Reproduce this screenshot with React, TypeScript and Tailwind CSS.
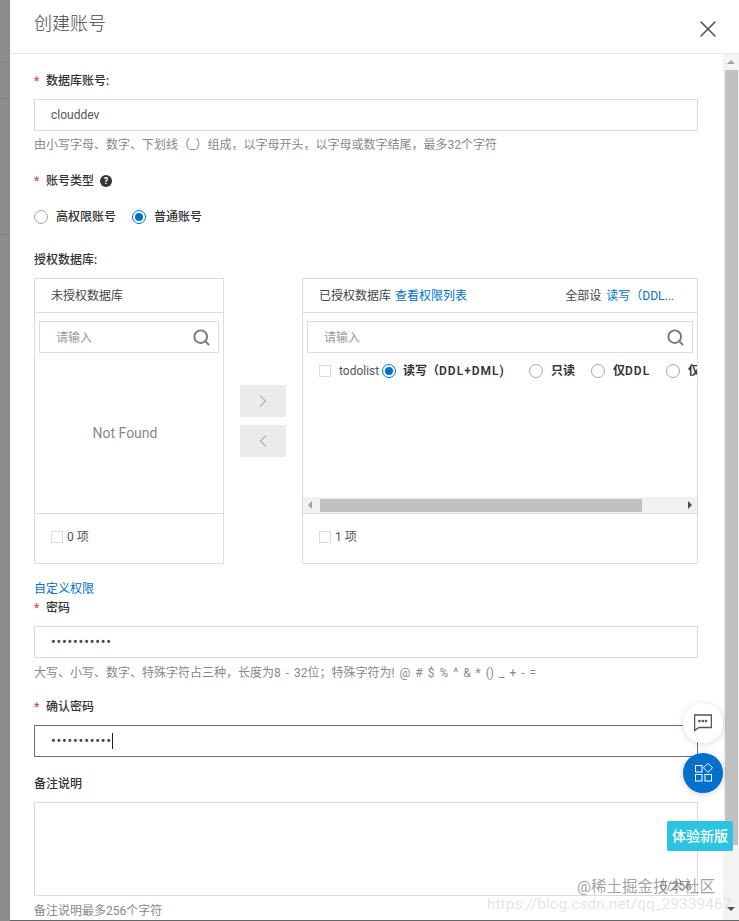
import { ChevronLeft, ChevronRight, Search, X } from "lucide-react";
import type { ReactNode } from "react";

const FONT = "[font-family:Roboto,'Noto_Sans_CJK_SC',sans-serif]";

function FieldLabel({ children, required, className = "" }: { children: ReactNode; required?: boolean; className?: string }) {
  return (
    <div className={`flex h-[18px] items-center pt-[2px] text-xs leading-[16px] font-medium text-[#333] ${className}`}>
      {required && <span className="mr-[6px] w-[6px] text-[#e5484d]">*</span>}
      {children}
    </div>
  );
}

function Help({ children, className = "" }: { children: ReactNode; className?: string }) {
  return <div className={`h-[18px] pt-[2px] text-xs leading-[16px] text-[#888] ${className}`}>{children}</div>;
}

function Radio({ checked }: { checked?: boolean }) {
  return (
    <span
      className={`flex h-[14px] w-[14px] shrink-0 items-center justify-center rounded-full border bg-white ${
        checked ? "border-[#0070cc]" : "border-[#a9a9a9]"
      }`}
    >
      {checked && <span className="h-2 w-2 rounded-full bg-[#0070cc]" />}
    </span>
  );
}

function Checkbox() {
  return <span className="h-3 w-3 shrink-0 border border-[#dcdcdc] bg-white" />;
}

function SearchBox() {
  return (
    <div className="mx-[4px] mt-2 flex h-8 items-center justify-between border border-[#dcdcdc] pt-px pr-[7px] pl-4 text-xs text-[#999]">
      <span>请输入</span>
      <Search size={19} strokeWidth={2.4} className="-mt-px text-[#777]" />
    </div>
  );
}

function PermissionRow() {
  return (
    <div className="mt-2 flex h-5 items-center whitespace-nowrap pl-4 text-xs">
      <Checkbox />
      <span className="ml-2 w-[31px] shrink-0 overflow-visible text-[#555]">todolist</span>
      <span className="ml-[12px] flex items-center font-semibold text-[#333]">
        <Radio checked />
        <span className="ml-[7px] w-[126px] shrink-0">
          读写（<span className="tracking-[1px]">DDL+DML)</span>
        </span>
        <Radio />
        <span className="ml-[8px] w-[40px] shrink-0">只读</span>
        <Radio />
        <span className="ml-[8px] w-[53px] shrink-0">
          仅<span className="tracking-[1px]">DDL</span>
        </span>
        <Radio />
        <span className="ml-[8px]">仅DML</span>
      </span>
    </div>
  );
}

function HorizontalScrollbar() {
  return (
    <div className="flex h-[16px] items-center bg-[#f1f1f1]">
      <span className="ml-[5px] h-0 w-0 border-y-[4px] border-r-[4px] border-y-transparent border-r-[#a3a3a3]" />
      <span className="ml-[8px] h-[13px] w-[322px] bg-[#c1c1c1]" />
      <span className="mr-[5px] ml-auto h-0 w-0 border-y-[4px] border-l-[4px] border-y-transparent border-l-[#505050]" />
    </div>
  );
}

function Transfer() {
  return (
    <div className="mt-[10px] flex h-[286px] w-[664px]">
      <div className="flex w-[190px] flex-col border border-[#dcdcdc]">
        <div className="flex h-[34px] shrink-0 items-center border-b border-[#dcdcdc] pl-4 text-xs text-[#444]">未授权数据库</div>
        <SearchBox />
        <div className="flex flex-1 items-center justify-center pr-[8px] text-sm text-[#8a8a8a]">Not Found</div>
        <div className="flex h-[50px] shrink-0 items-center border-t border-[#dcdcdc] pb-[4px] pl-4 text-xs text-[#555]">
          <Checkbox />
          <span className="ml-[4px]">0 项</span>
        </div>
      </div>

      <div className="mx-[16px] flex w-[46px] flex-col gap-2 pt-[107px]">
        <div className="flex h-8 items-center justify-center rounded-[1px] bg-[#ebebeb] text-[#b5b5b5]">
          <ChevronRight size={20} strokeWidth={1.5} />
        </div>
        <div className="flex h-8 items-center justify-center rounded-[1px] bg-[#ebebeb] text-[#b5b5b5]">
          <ChevronLeft size={20} strokeWidth={1.5} />
        </div>
      </div>

      <div className="flex w-[396px] flex-col overflow-hidden border border-[#dcdcdc]">
        <div className="flex h-[34px] shrink-0 items-center justify-between border-b border-[#dcdcdc] pr-[23px] pl-4 text-xs text-[#444]">
          <span>
            已授权数据库<span className="ml-[4px] text-[#0070cc]">查看权限列表</span>
          </span>
          <span>
            全部设<span className="ml-[5px] text-[#0070cc]">读写（DDL...</span>
          </span>
        </div>
        <SearchBox />
        <div className="flex-1 overflow-hidden">
          <PermissionRow />
        </div>
        <HorizontalScrollbar />
        <div className="flex h-[50px] shrink-0 items-center border-t border-[#dcdcdc] pb-[4px] pl-4 text-xs text-[#555]">
          <Checkbox />
          <span className="ml-[4px]">1 项</span>
        </div>
      </div>
    </div>
  );
}

function FloatingActions() {
  return (
    <>
      <div className="absolute top-[703px] left-[683px] flex h-10 w-10 items-center justify-center rounded-full bg-white shadow-[0_1px_6px_rgba(0,0,0,0.15)]">
        <svg width="18" height="18" viewBox="0 0 18 18" fill="none" stroke="#555" strokeWidth="1.5">
          <path d="M0.5 1h17v12.5H5L0.5 16.5z" />
          <circle cx="5.5" cy="7" r="0.6" fill="#555" />
          <circle cx="8.8" cy="7" r="0.6" fill="#555" />
          <circle cx="12" cy="7" r="0.6" fill="#555" />
        </svg>
      </div>
      <div className="absolute top-[753px] left-[683px] flex h-10 w-10 items-center justify-center rounded-full bg-[#0070cc] shadow-[0_1px_6px_rgba(0,0,0,0.2)]">
        <svg width="20" height="20" viewBox="0 0 20 20" fill="none" stroke="#fff" strokeWidth="1">
          <rect x="2.5" y="2.5" width="6.5" height="6.5" />
          <rect x="2.5" y="11.5" width="6.5" height="6.5" />
          <rect x="12" y="11.5" width="6.5" height="6.5" />
          <path d="M15 0.3l4.5 4.5-4.5 4.5-4.5-4.5z" />
        </svg>
      </div>
      <div className="absolute top-[821px] left-[667px] flex h-[30px] w-[66px] items-center justify-center rounded-[2px] bg-[#2cc4e0] text-sm font-medium text-white">
        体验新版
      </div>
    </>
  );
}

function Watermark() {
  return (
    <>
      <div className="absolute top-[878px] left-[660px] text-xs text-[#888]">0/256</div>
      <div className="pointer-events-none absolute top-[876px] left-[577px] text-[15.5px] whitespace-nowrap text-[#777]/70">@稀土掘金技术社区</div>
      <div className="pointer-events-none absolute top-[893px] left-[487px] text-[15.5px] whitespace-nowrap text-[#ccc]/50">https://blog.csdn.net/qq_29339467</div>
    </>
  );
}

export default function App() {
  return (
    <div className={`relative flex h-[921px] w-[739px] overflow-hidden bg-white ${FONT}`}>
      <div className="relative w-[10px] shrink-0 bg-[#8c8c8c]">
        <div className="mt-[62px] h-px bg-[#808080]" />
        <div className="mt-[35px] h-px bg-[#808080]" />
        <div className="mt-[135px] h-px bg-[#808080]" />
      </div>

      <div className="flex min-w-0 flex-1 flex-col">
        <header className="flex h-[54px] shrink-0 items-center justify-between border-b border-[#e8e8e8] pr-[17px] pl-[24px]">
          <h1 className="pb-[5px] text-lg font-light text-[#444]">创建账号</h1>
          <X size={28} strokeWidth={1.4} className="mt-[5px] text-[#555]" />
        </header>

        <div className="flex min-h-0 flex-1">
          <main className="min-w-0 flex-1 pt-[17px] pl-[24px]">
            <FieldLabel required>数据库账号:</FieldLabel>
            <div className="mt-[10px] flex h-8 w-[664px] items-center border border-[#dcdcdc] pl-4 text-xs text-[#555]">clouddev</div>
            <Help className="mt-[4px]">由小写字母、数字、下划线（_）组成，以字母开头，以字母或数字结尾，最多32个字符</Help>
            <FieldLabel required className="mt-[18px]">
              账号类型
              <span className="ml-[6px] flex h-3 w-3 items-center justify-center rounded-full bg-[#333] text-[9px] leading-none font-bold text-white">?</span>
            </FieldLabel>
            <div className="mt-[19px] flex h-[18px] items-center text-xs font-medium text-[#333]">
              <Radio />
              <span className="ml-2">高权限账号</span>
              <span className="ml-4"><Radio checked /></span>
              <span className="ml-2">普通账号</span>
            </div>
            <FieldLabel className="mt-[24px]">授权数据库:</FieldLabel>
            <Transfer />
            <div className="mt-[15px] h-[18px] pt-[2px] text-xs leading-[16px] text-[#0070cc]">自定义权限</div>
            <FieldLabel required className="mt-px">密码</FieldLabel>
            <div className="mt-[10px] flex h-8 w-[664px] items-center border border-[#dcdcdc] pl-4 text-sm tracking-[0.8px] text-[#444]">•••••••••••</div>
            <Help className="mt-[5px] [word-spacing:2px]">
              大写、小写、数字、特殊字符占三种，长度为8 - 32位；特殊字符为! @ # $ % ^ &amp; * () _ + - =
            </Help>
            <FieldLabel required className="mt-[16px]">确认密码</FieldLabel>
            <div className="mt-[10px] flex h-8 w-[664px] items-center border border-[#707070] pl-4 text-sm tracking-[0.8px] text-[#444]">
              •••••••••••
              <span className="h-4 w-px bg-[#222]" />
            </div>
            <FieldLabel className="mt-[17px]">备注说明</FieldLabel>
            <div className="mt-[10px] h-[94px] w-[664px] border border-[#dcdcdc]" />
            <Help className="mt-[5px]">备注说明最多256个字符</Help>
          </main>

          <div className="flex w-[16px] shrink-0 flex-col items-center bg-[#f3f3f3]">
            <span className="mt-[6px] h-0 w-0 border-x-[4px] border-b-[4px] border-x-transparent border-b-[#a3a3a3]" />
            <span className="mt-[6px] h-[775px] w-[13px] bg-[#c1c1c1]" />
            <span className="mt-auto mb-[9px] h-0 w-0 border-x-[4px] border-t-[4px] border-x-transparent border-t-[#505050]" />
          </div>
        </div>
        <div className="h-px shrink-0 bg-[#666]" />
      </div>

      <Watermark />
      <FloatingActions />
    </div>
  );
}
